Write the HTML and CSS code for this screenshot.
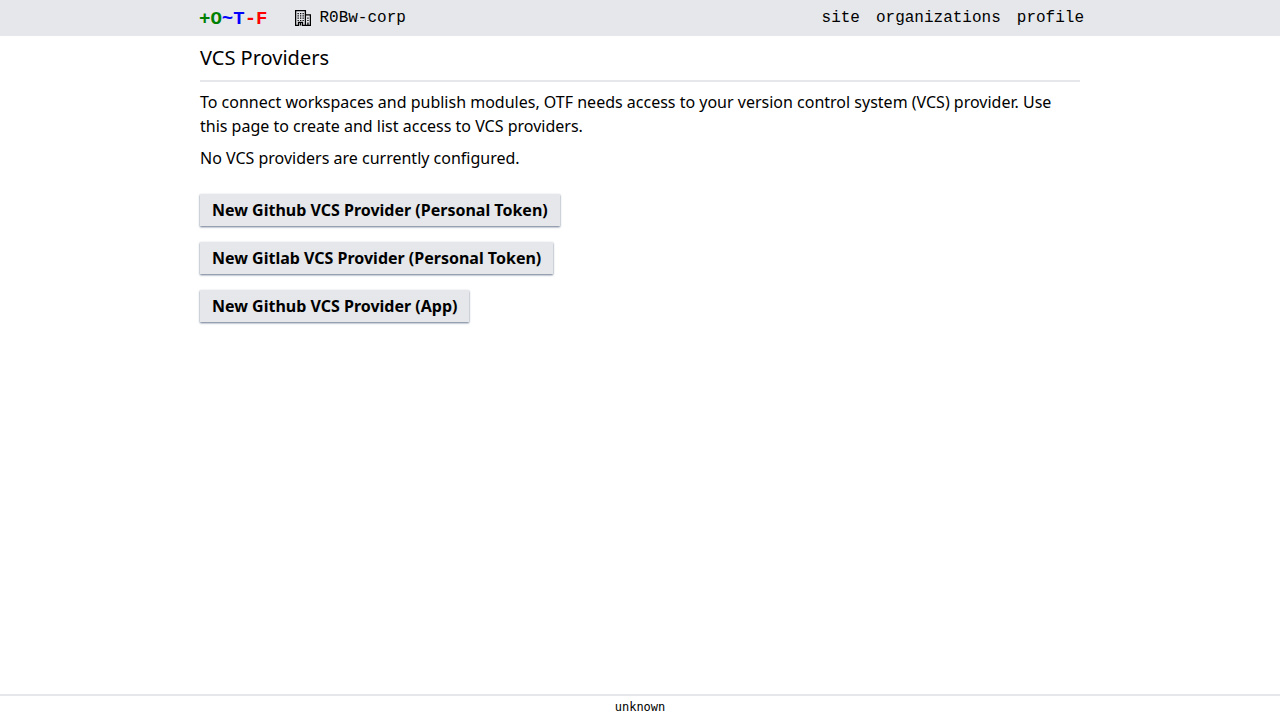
FILE: index.html
```html
<!DOCTYPE html>
<html lang="en">
<head>
<meta charset="utf-8">
<title>VCS Providers</title>
<link rel="stylesheet" href="styles.css">
</head>
<body>
<header class="header">
  <nav class="nav">
    <a class="logo" href="#"><span class="add">+O</span><span class="change">~T</span><span class="remove">-F</span></a>
    <a class="org" href="#">
      <svg class="org-icon" viewBox="0 0 16 16" aria-hidden="true">
        <path fill="none" stroke="currentColor" stroke-width="1.300" d="M.6 16V.6h9.800V16M10.400 4.900h5V16M0 15.400h3.500v-3h4v3H16M5.500 12.400v3"/>
        <path fill="currentColor" d="M2.500 3h1.300v1.200H2.500zM5 3h1.300v1.200H5zM7.500 3h1.300v1.200H7.500zM2.500 5.300h1.300v1.200H2.500zM5 5.300h1.300v1.200H5zM7.500 5.300h1.300v1.200H7.500zM2.500 7.600h1.300v1.200H2.500zM5 7.600h1.300v1.200H5zM7.500 7.600h1.300v1.200H7.500zM2.500 9.900h1.300v1.200H2.500zM5 9.900h1.300v1.200H5zM7.500 9.900h1.300v1.200H7.500zM12.300 7.600h1.300v1.200h-1.300zM12.300 9.900h1.300v1.200h-1.300zM12.300 12.500h1.300v3h-1.300z"/>
      </svg>
      <span>R0Bw-corp</span>
    </a>
    <div class="links">
      <a href="#">site</a>
      <a href="#">organizations</a>
      <a href="#">profile</a>
    </div>
  </nav>
</header>
<main class="content">
  <h1 class="title">VCS Providers</h1>
  <p>To connect workspaces and publish modules, OTF needs access to your version control system (VCS) provider. Use this page to create and list access to VCS providers.</p>
  <p>No VCS providers are currently configured.</p>
  <div class="actions">
    <button class="btn" type="button">New Github VCS Provider (Personal Token)</button>
    <button class="btn" type="button">New Gitlab VCS Provider (Personal Token)</button>
    <button class="btn" type="button">New Github VCS Provider (App)</button>
  </div>
</main>
<footer class="footer">unknown</footer>
</body>
</html>
```
FILE: styles.css
```css
* { box-sizing: border-box; margin: 0; }
body {
  display: flex;
  flex-direction: column;
  min-height: 100vh;
  font: 16px/24px "Noto Sans", sans-serif;
  color: #000;
  background: #fff;
}
a { color: inherit; text-decoration: none; }
.header {
  background: #e5e7eb;
  font-family: "Liberation Mono", monospace;
}
.nav {
  display: flex;
  align-items: center;
  width: 100%;
  max-width: 900px;
  height: 36px;
  margin: 0 auto;
  padding: 0 6px 0 9px;
}
.logo { font-size: 19px; line-height: 28px; padding-top: 2px; font-weight: 700; }
.add { color: green; }
.change { color: blue; }
.remove { color: red; }
.org {
  display: flex;
  align-items: center;
  gap: 8px;
  margin-left: 28px;
}
.org-icon { width: 16px; height: 16px; }
.links {
  display: flex;
  gap: 16px;
  margin-left: auto;
}
.content {
  display: flex;
  flex: 1;
  flex-direction: column;
  gap: 8px;
  width: 100%;
  max-width: 896px;
  margin: 0 auto;
  padding: 8px;
}
.title {
  padding-bottom: 8px;
  border-bottom: 2px solid #e5e7eb;
  font-size: 20px;
  line-height: 28px;
  font-weight: 400;
}
.actions {
  display: flex;
  flex-direction: column;
  align-items: flex-start;
  gap: 16px;
  margin-top: 16px;
}
.btn {
  padding: 4px 12px;
  border: 0;
  background: #e5e7eb;
  color: #000;
  font: inherit;
  font-weight: 700;
  box-shadow: 0 1px 2px #64748b;
  cursor: pointer;
}
.footer {
  padding: 3px 4px 5px;
  border-top: 2px solid #e5e7eb;
  font: 12px/16px "DejaVu Sans Mono", monospace;
  text-align: center;
}
```
